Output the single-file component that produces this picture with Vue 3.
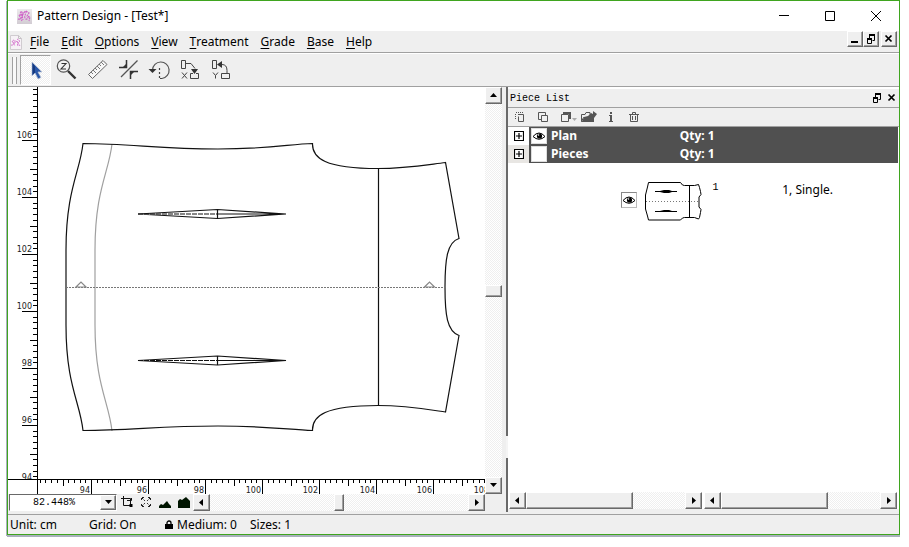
<script setup>
import { ref } from 'vue'

const menus = ['File', 'Edit', 'Options', 'View', 'Treatment', 'Grade', 'Base', 'Help']
const zoom = ref('82.448%')
const rows = [
  { name: 'Plan', qty: 'Qty: 1', visible: true },
  { name: 'Pieces', qty: 'Qty: 1', visible: false }
]

const STEP = 28.5
// Ruler marks: every fifth is 1 cm, every tenth carries a label.
const marks = (origin, dir, from, to, base) => {
  const list = []
  for (let i = from; i <= to; i++) {
    const major = i % 10 === 0
    list.push({
      key: i,
      pos: Math.round(origin + (dir * i * STEP) / 5) + 0.5,
      size: major ? 15 : i % 5 === 0 ? 7 : 4,
      label: major ? String(base + i / 5) : ''
    })
  }
  return list
}
const vMarks = marks(338, -1, -10, 59, 96)
const hMarks = marks(83, 1, -9, 70, 94)
</script>

<template>
  <div class="window">
    <header class="titlebar">
      <svg class="logo" width="16" height="16" viewBox="0 0 16 16">
        <defs>
          <linearGradient id="sheet" x1="0" y1="0" x2="0" y2="1">
            <stop offset="0" stop-color="#eceaec" /><stop offset="1" stop-color="#d2ccd3" />
          </linearGradient>
        </defs>
        <rect x="1" y="1" width="15" height="15" fill="url(#sheet)" />
        <path d="M2 11c3 1 5-3 5-6 0-2-3-1-3 1s3 1 4-1 2-3 2-1-2 4-1 6 3 1 3-1M10 3l3 2-2 3 3 1-1 4M3 7l3 6M5 3l2 9" fill="none" stroke="#cf62c8" stroke-width="1.1" stroke-dasharray="2 .7" />
      </svg>
      <h1>Pattern Design - [Test*]</h1>
      <div class="winbtns">
        <button aria-label="Minimize"><svg width="12" height="12"><path d="M1 5.5h10" /></svg></button>
        <button aria-label="Maximize"><svg width="12" height="12"><path d="M1.5 1.5h9v9h-9z" /></svg></button>
        <button aria-label="Close"><svg width="12" height="12"><path d="M1 1l10 10M11 1L1 11" /></svg></button>
      </div>
    </header>

    <nav class="menubar">
      <svg class="doc" width="14" height="16" viewBox="0 0 14 16">
        <path d="M1.5 1.5h8l3 3v11h-11z" fill="#f6f2f6" stroke="#d0ccd0" />
        <path d="M9.500 1.500v3h3" fill="none" stroke="#c4c0c4" />
        <path d="M2 11c2 1 4-2 4-4s-3-1-2 1 3 0 4-1 0 4 1 5M8 5l3 2-2 2 2 3M3 7l3 5" fill="none" stroke="#d77bd0" stroke-dasharray="2 .7" />
      </svg>
      <button v-for="m in menus" :key="m" class="menu"><u>{{ m[0] }}</u>{{ m.slice(1) }}</button>
      <div class="mdi">
        <button class="raised" aria-label="Minimize document"><svg width="10" height="10"><path d="M1 8h7" stroke-width="2" /></svg></button>
        <button class="raised" aria-label="Restore document"><svg width="10" height="10"><path d="M3 1h6M1 5h5" stroke-width="2" /><path d="M3.500 2v2M8.500 2v4.500h-2M1.500 5v4.500h4V5" /></svg></button>
        <button class="raised last" aria-label="Close document"><svg width="10" height="10"><path d="M1.500 1.500l6 6M7.500 1.500l-6 6" stroke-width="1.700" /></svg></button>
      </div>
    </nav>

    <div class="toolbar">
      <span class="grip"></span>
      <button class="tool pressed" aria-label="Select">
        <svg width="24" height="24" viewBox="0 0 24 24"><path d="M8 4v14l3-3 3 6 3-1.500-3-5.500h4z" fill="#2a57a8" stroke="#b9c3d6" stroke-width=".8" /><path d="M8.500 5v12l2.500-2.500v-6z" fill="#163a80" /></svg>
      </button>
      <button class="tool" aria-label="Zoom">
        <svg width="24" height="24" viewBox="0 0 24 24"><circle cx="8.500" cy="8" r="6.200" fill="#f2f2f2" stroke="#555" stroke-width="1.200" /><path d="M6.500 5.500h4.500l-5 5.500h5" fill="none" stroke="#333" stroke-width="1.100" /><path d="M13 13l7.500 7.500" stroke="#333" stroke-width="2.400" /></svg>
      </button>
      <button class="tool" aria-label="Measure">
        <svg width="24" height="24" viewBox="0 0 24 24"><path d="M2.500 16.500L17 2.500l4 4L6.500 20.500z" fill="#f7f7f7" stroke="#666" /><path d="M5 14l2 2M7 12l3 3M9 10l2 2M11 8l3 3M13 6l2 2M15 4l3 3" stroke="#777" fill="none" /></svg>
      </button>
      <button class="tool" aria-label="Trim">
        <svg width="24" height="24" viewBox="0 0 24 24"><path d="M20.500 2.500L4 19" stroke="#555" stroke-width="1.200" /><path d="M2 9.500h7.500V2M13.500 21v-7.500H21" fill="none" stroke="#333" stroke-width="1.500" /><path d="M5.500 9.500h4v-4zM13.500 17.500v-4h4z" fill="#333" /></svg>
      </button>
      <button class="tool" aria-label="Rotate">
        <svg width="24" height="24" viewBox="0 0 24 24"><path d="M4.500 12a8.300 8.300 0 1 1 9.500 8.500" fill="none" stroke="#555" stroke-width="1.200" /><path d="M.500 11h8l-4 4z" fill="#333" /><path d="M11.500 10v10.500M12 20.500h3" fill="none" stroke="#444" stroke-width="1.200" stroke-dasharray="2 2" /></svg>
      </button>
      <button class="tool" aria-label="Move along X">
        <svg width="24" height="24" viewBox="0 0 24 24"><g fill="none" stroke="#444" stroke-width="1"><path d="M2.500 2.500h4v8h-4zM7 5.500h5l4 5M3 14.500l5 6M8 14.500l-5 6M14 15.500h-2.500v5h8v-5H17" /></g><path d="M12 11h7l-3.500 5z" fill="#333" /></svg>
      </button>
      <button class="tool" aria-label="Move along Y">
        <svg width="24" height="24" viewBox="0 0 24 24"><g fill="none" stroke="#444" stroke-width="1"><path d="M2.500 2.500h4v8h-4zM8 6.500h4q5 0 5 6v3M3 14.500l2.500 3 2.500-3M5.500 17.500v3M11.500 15.500h8v5h-8z" /></g><path d="M7 6.500l5-3.500v7z" fill="#333" /></svg>
      </button>
    </div>

    <main class="work">
      <section class="drawing">
        <svg class="canvas" width="100%" height="100%">
          <g transform="translate(-8 -87)" fill="none" stroke="#111" stroke-width="1.200">
            <path d="M112 144C109 172 95 190 95 250V325C95 385 109 402 112 431" stroke="#a0a0a0" />
            <path d="M83 143.500C130 143.500 160 149 218 149C270 149 290 144 312.500 143.500C312 158 325 168.500 378 168.500C405 168.500 425 165 445.500 162.500L459 238.500C447 242 445 260 445 287C445 315 447 331 459 335.500L445.500 412C425 409 405 405.500 378 405.500C325 405.500 312 416 312.500 430.500C290 430 270 426 218 426C160 426 130 430.500 83 430.500C80 402 66 385 66 325V250C66 190 80 172 83 143.500Z" />
            <path d="M378.500 168.500V405.500" />
            <path d="M66 287.500H445" stroke="#777" stroke-width="1" stroke-dasharray="2 1" />
            <path d="M76 287l5-5 5 5zM424.500 287l5-5 5 5z" stroke="#888" />
            <g v-for="y in [214, 360.5]" :key="y" :transform="`translate(0 ${y})`">
              <path d="M138 0L217.500-4.500 286 0 217.500 4.500ZM217.500-4.500V4.500M217.500 0H286" />
              <path d="M138 0H217" stroke-dasharray="5 1" />
            </g>
          </g>
          <line class="axis" x1="29.5" x2="29.5" y1="0" y2="100%" />
          <g v-for="t in vMarks" :key="t.key">
            <line class="tick" :x1="29 - t.size" x2="29" :y1="t.pos" :y2="t.pos" />
            <text v-if="t.label" x="24" :y="t.pos - 2.5" text-anchor="end">{{ t.label }}</text>
          </g>
        </svg>
        <svg class="hruler" width="100%" height="15">
          <line class="axis" x1="0" x2="100%" y1=".5" y2=".5" />
          <line class="axis" x1="29.5" x2="29.5" y1="0" y2="15" />
          <g v-for="t in hMarks" :key="t.key">
            <line class="tick" :x1="t.pos" :x2="t.pos" y1="0" :y2="t.size" />
            <text v-if="t.label" :x="t.pos - 1.5" y="14" text-anchor="end">{{ t.label }}</text>
          </g>
        </svg>
        <div class="scroll vertical">
          <button class="raised arrow" aria-label="Scroll up"><svg width="9" height="9"><path d="M1 6l3.500-4L8 6z" /></svg></button>
          <div class="track"><span class="raised thumb"></span></div>
          <button class="raised arrow" aria-label="Scroll down"><svg width="9" height="9"><path d="M1 2l3.500 4L8 2z" /></svg></button>
        </div>
        <div class="bottom">
          <label class="combo">
            <select v-model="zoom" aria-label="Zoom level"><option>82.448%</option><option>100%</option></select>
            <span class="raised drop"><svg width="9" height="9"><path d="M1 2h7L4.500 6z" /></svg></span>
          </label>
          <div class="viewbtns">
            <button aria-label="Fit piece"><svg width="12" height="12"><path d="M2.500 0v9.500H10M0 2.500h9.500V9M6 4.500h4.500V2" fill="none" stroke="#111" /><path d="M8.500 8h3v3h-3z" /></svg></button>
            <button aria-label="Fit all"><svg width="12" height="12"><path d="M1.500 4V1.500H4M8 1.500h2.500V4M1.500 8v2.500H4M8 10.500h2.500V8M2 2l3 3M10 2L7 5M2 10l3-3M10 10L7 7" fill="none" stroke="#222" stroke-dasharray="2 1" /></svg></button>
            <button aria-label="Zoom out"><svg width="12" height="12"><path d="M0 12v-2l2-2 2 1 4-4 2 3 2 2v2z" fill="#001500" /></svg></button>
            <button aria-label="Zoom in"><svg width="12" height="12"><path d="M0 12V5l2-2 2 1 4-3 2 2 2 2v7z" fill="#001500" /></svg></button>
          </div>
          <div class="scroll">
            <button class="raised arrow" aria-label="Scroll left"><svg width="9" height="9"><path d="M6 1v7L2 4.500z" /></svg></button>
            <div class="track"><span class="raised thumb"></span></div>
            <button class="raised arrow" aria-label="Scroll right"><svg width="9" height="9"><path d="M3 1v7l4-3.500z" /></svg></button>
          </div>
        </div>
      </section>

      <div class="splitter"><i class="edge"></i><i class="handle"></i><i class="edge short"></i></div>

      <aside class="panel">
        <header class="panelhead">
          <h2>Piece List</h2>
          <button aria-label="Float panel"><svg width="10" height="10"><path d="M3 1h6M1 5h5" stroke-width="2" /><path d="M3.500 2v2M8.500 2v4.500h-2M1.500 5v4.500h4V5" /></svg></button>
          <button aria-label="Close panel"><svg width="10" height="10"><path d="M1.500 1.500l6 6M7.500 1.500l-6 6" stroke-width="1.700" /></svg></button>
        </header>
        <div class="paneltools">
          <button aria-label="New piece"><svg width="12" height="12"><path d="M4 3.500h5.500v7h-5v-5" /><path d="M2 1.500h8M1.500 3v6" stroke-dasharray="1 1" /></svg></button>
          <button aria-label="Copy"><svg width="12" height="12"><path d="M4.500 4.500h6v6h-6zM8.500 4V1.500h-7v7H4" /></svg></button>
          <button aria-label="Arrange"><svg width="18" height="12"><path d="M1.500 3.500h7v7h-7z" /><path d="M3 1h8v7H9V3H3z" fill="#555" stroke="none" /><path d="M12 7h5l-2.500 3z" fill="#aaa" stroke="none" /></svg></button>
          <button aria-label="Export"><svg width="17" height="12"><path d="M1.500 10.500v-7H5l1-2h4v2M1.500 10.500h9l2-4h-9z" /><path d="M8 5l3-3 2 1V0l4 3-3 4v4H2l2-5z" fill="#555" stroke="none" /></svg></button>
          <button aria-label="Information"><svg width="12" height="12"><path d="M5 1h2v2H5zM4 4h3v6h1v1H4v-1h1V5H4z" fill="#555" stroke="none" /></svg></button>
          <button aria-label="Delete"><svg width="12" height="12"><path d="M2.500 4v6.500h7V4M1 3.500h10M4.500 3V1.500h3V3M4.500 5v4M7.500 5v4" /></svg></button>
        </div>

        <div class="rows">
          <div v-for="r in rows" :key="r.name" class="row">
            <span class="expander"><button :aria-label="'Expand ' + r.name"><svg width="10" height="10"><path d="M.500 .500h9v9h-9zM2 5h6M5 2v6" fill="#fff" stroke="#000" stroke-width="1.200" /></svg></button></span>
            <button class="eye" :aria-label="'Show ' + r.name">
              <svg v-if="r.visible" width="14" height="14" viewBox="0 0 14 14"><path d="M1 7.500Q7 .500 13 7.500 7 13 1 7.500z" fill="#fff" stroke="#000" /><circle cx="7.500" cy="7" r="2.600" /><circle cx="6.500" cy="6" r=".8" fill="#fff" /></svg>
            </button>
            <span class="name">{{ r.name }}</span>
            <span class="qty">{{ r.qty }}</span>
          </div>
        </div>

        <div class="pieces">
          <button class="eye framed" aria-label="Show piece 1">
            <svg width="14" height="14" viewBox="0 0 14 14"><path d="M1 7.500Q7 .500 13 7.500 7 13 1 7.500z" fill="#fff" stroke="#000" /><circle cx="7.500" cy="7" r="2.600" /><circle cx="6.500" cy="6" r=".8" fill="#fff" /></svg>
          </button>
          <svg class="thumbnail" width="58" height="40" viewBox="0 0 58 40">
            <g fill="none" stroke="#000">
              <path d="M3.500 .500H35.500l2 2.500 2 .500h10l4-1 1 3 1 4 .500 3-2 2.500v10l2 2.500-.500 3-1 5-1 1.500-4-1.500h-10l-2 .500-2 2H3.500l-1-4-2-7V13l2-8z" />
              <path d="M44.500 4v31M10 9.500h22M10 29.500h22" />
              <path d="M1 19.500h53" stroke="#777" stroke-dasharray="1 2" />
            </g>
            <path d="M15 9l4-1h5l3 1v1l-3 1h-5l-4-1zM15 29l4-1h5l3 1v1H15z" />
          </svg>
          <span class="num">1</span>
          <span class="desc">1, Single.</span>
        </div>

        <div class="scrolls">
          <div v-for="n in 2" :key="n" class="scroll">
            <button class="raised arrow" aria-label="Scroll left"><svg width="9" height="9"><path d="M6 1v7L2 4.500z" /></svg></button>
            <div class="track start"><span class="raised thumb wide"></span></div>
            <button class="raised arrow" aria-label="Scroll right"><svg width="9" height="9"><path d="M3 1v7l4-3.500z" /></svg></button>
          </div>
        </div>
      </aside>
    </main>

    <footer class="status">
      <span class="unit">Unit: cm</span>
      <span class="grid">Grid: On</span>
      <svg width="8" height="10"><path d="M2 4.500V3a2 2 0 0 1 4 0v1.500" fill="none" stroke="#000" stroke-width="1.300" /><path d="M0 4h8v5H0z" /></svg>
      <span class="medium">Medium: 0</span>
      <span>Sizes: 1</span>
    </footer>
  </div>
</template>

<style>
html, body, #app { height: 100%; margin: 0; background: #fff; }
</style>

<style scoped>
* { box-sizing: border-box; }
svg { display: block; flex: none; }
button { font: inherit; color: inherit; padding: 0; border: 0; background: none; display: flex; align-items: center; justify-content: center; flex: none; }
h1, h2 { margin: 0; font-weight: 400; }

.window { height: calc(100% - 12px); margin: 0 9px 0 7px; border: 1px solid #3fa51f; box-shadow: 0 2px 0 #a9b0bd, -1px 1px 0 #a9b0bd; background: #efefef; display: flex; flex-direction: column; font: 12px/16px "Noto Sans", sans-serif; color: #000; }

.titlebar { height: 30px; background: #fff; display: flex; align-items: center; padding-left: 8px; gap: 5px; flex: none; }
.titlebar h1 { font-size: 12px; flex: 1; }
.winbtns { display: flex; }
.winbtns button { width: 46px; height: 30px; }
.winbtns svg, .mdi svg, .panelhead svg { fill: none; stroke: #000; }

.menubar { height: 22px; display: flex; align-items: center; border-bottom: 1px solid #a0a0a0; flex: none; }
.menubar .doc { margin: 0 1px 0 1px; }
.menu { padding: 0 6px; height: 20px; font-size: 12px; }
.menu u { text-underline-offset: 2px; }
.mdi { display: flex; margin: 0 2px 4px auto; align-self: flex-start; }
.mdi button { width: 16px; height: 16px; }
.mdi .last { margin-left: 2px; }

.raised { background: #efefef; border: 1px solid; border-color: #fff #696969 #696969 #fff; box-shadow: inset -1px -1px 0 #a0a0a0; }

.toolbar { height: 34px; display: flex; align-items: center; padding-left: 4px; border-top: 1px solid #fff; border-bottom: 1px solid #a0a0a0; flex: none; }
.grip { width: 5px; height: 27px; margin-right: 3px; border-left: 1px solid #a0a0a0; border-right: 1px solid #a0a0a0; background: #f8f8f8; }
.tool { width: 31px; height: 30px; }
.pressed { border: 1px solid; border-color: #a0a0a0 #fff #fff #a0a0a0; background: repeating-conic-gradient(#fff 0 25%, #efefef 0 50%) 0 0 / 2px 2px; }

.work { flex: 1; min-height: 0; display: grid; grid-template-columns: minmax(0, 494fr) 6px minmax(0, 391fr); }
.drawing { display: grid; min-height: 0; grid-template-columns: minmax(0, 1fr) 17px; grid-template-rows: minmax(0, 1fr) 15px 20px; background: #efefef; }
.canvas, .hruler { background: #fff; grid-column: 1; }
.canvas text, .hruler text { font: 8px "DejaVu Sans", sans-serif; fill: #222; }
.axis, .tick { stroke: #000; stroke-width: 1; }

.scroll { display: flex; height: 17px; min-width: 0; flex: 1; background: repeating-conic-gradient(#fff 0 25%, #efefef 0 50%) 0 0 / 2px 2px; }
.arrow { width: 17px; height: 17px; }
.track { flex: 1; display: flex; justify-content: center; }
.track.start { justify-content: flex-start; }
.thumb { width: 10px; }
.thumb.wide { width: 67%; }
.vertical { grid-column: 2; grid-row: 1 / 3; flex-direction: column; height: auto; min-height: 0; }
.vertical .track { flex-direction: column; }
.vertical .thumb { width: 17px; height: 12px; }

.bottom { grid-column: 1; display: flex; align-items: flex-start; padding-left: 1px; }
.combo { position: relative; width: 108px; height: 17px; border: 1px solid; border-color: #696969 #fff #fff #696969; background: #fff; flex: none; }
.combo select { appearance: none; display: block; width: 100%; height: 15px; border: 0; padding: 0 0 0 23px; margin: 0; background: #fff; color: #000; font: 10px/15px "Liberation Mono", monospace; }
.drop { position: absolute; right: 0; top: 0; width: 16px; height: 15px; display: flex; align-items: center; justify-content: center; pointer-events: none; }
.viewbtns { display: flex; gap: 7px; padding: 2px 3px 0 4px; }

.splitter { display: flex; flex-direction: column; }
.splitter i { flex: 350; border-right: 2px solid #696969; }
.splitter .handle { flex: 22; border-color: #f4f4f4; }
.splitter .short { flex: 54; margin-bottom: 2px; }

.panel { display: flex; flex-direction: column; min-width: 0; background: #fff; border-bottom: 5px solid #efefef; }
.panelhead { display: flex; align-items: center; height: 21px; border-top: 2px solid #fff; border-bottom: 1px solid #a0a0a0; background: #efefef; padding: 0 2px 0 2px; gap: 5px; flex: none; }
.panelhead h2 { flex: 1; font: 10px/16px "Liberation Mono", monospace; padding-top: 2px; }
.paneltools { display: flex; align-items: center; gap: 11px; height: 19px; padding-left: 6px; background: #efefef; border-bottom: 1px solid #a0a0a0; flex: none; }
.paneltools svg { fill: none; stroke: #555; }
.paneltools button:nth-child(3) { margin-right: -9px; }
.paneltools button:nth-child(4) { margin-right: -3px; }

.rows { margin-right: 1px; }
.row { height: 18px; display: flex; align-items: center; background: #505050; color: #fff; font-weight: 700; }
.expander { width: 21px; height: 18px; background: #fff; display: flex; align-items: center; justify-content: center; flex: none; }
.row + .row .expander { background: #e8e6e3; }
.eye { width: 16px; height: 16px; background: #fff; border: 1px solid #ddd; }
.row .eye { margin: 0 4px 0 2px; }
.name { width: 33%; padding-right: 4px; }
.framed { border-color: #888 #bbb #bbb #888; margin-top: 10px; }
.pieces { flex: 1; min-height: 0; display: flex; align-items: flex-start; padding: 19px 0 0 29%; }
.thumbnail { margin: 0 9px 0 8px; }
.num { font: 10px/12px "Liberation Mono", monospace; margin-right: 23%; }
.desc { white-space: nowrap; }
.scrolls { display: flex; gap: 2px; padding: 0 2px 0 1px; }

.status { height: 20px; border-top: 1px solid #a0a0a0; display: flex; align-items: center; padding-left: 2px; flex: none; white-space: nowrap; }
.unit { width: 79px; }
.grid { width: 76px; }
.medium { margin: 0 13px 0 4px; }
</style>
